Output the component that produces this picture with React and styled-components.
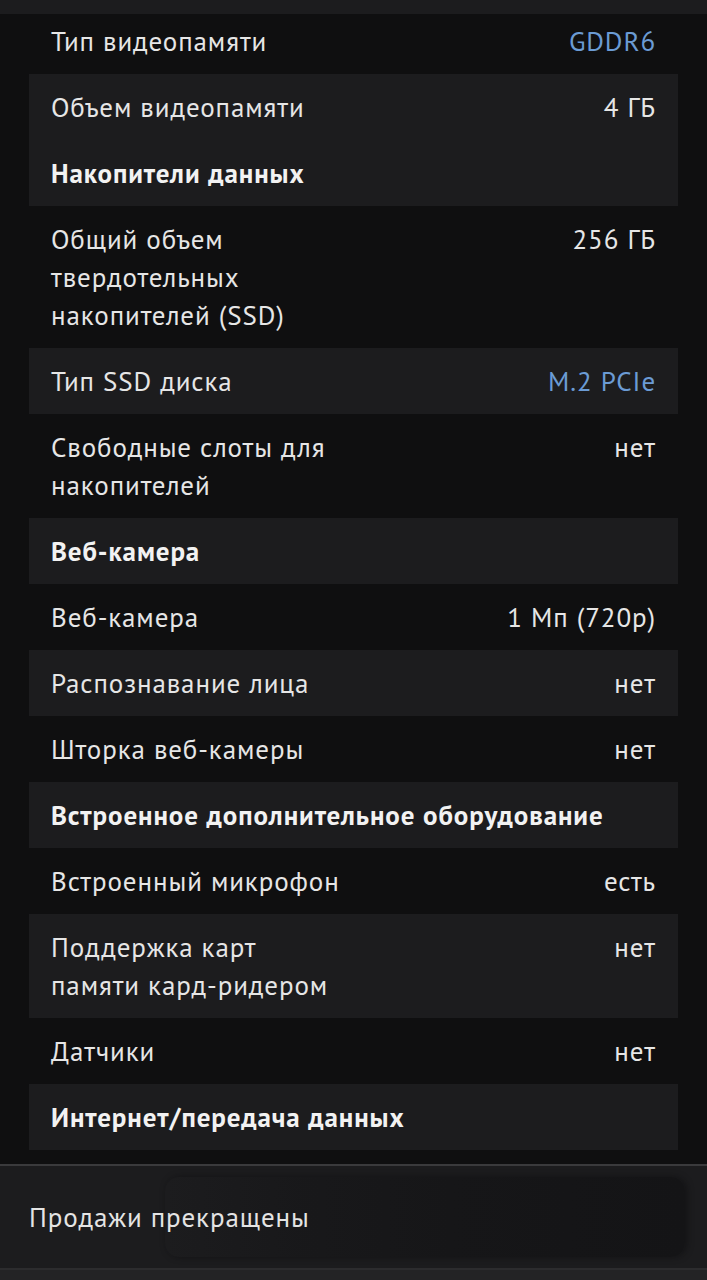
import { createGlobalStyle } from 'styled-components';
import styled from 'styled-components';

const GlobalStyle = createGlobalStyle`
  html, body {
    margin: 0;
    padding: 0;
    background: #0f0f10;
  }
  body {
    font-family: "PT Sans", "Noto Sans", "Open Sans", sans-serif;
    -webkit-font-smoothing: antialiased;
  }
`

const Page = styled.div`
  width: 707px;
  height: 1280px;
  display: flex;
  flex-direction: column;
  background: #0f0f10;
  overflow: hidden;
`

const TopBar = styled.div`
  height: 14px;
  flex: none;
  background: #1c1c1e;
`

const Specs = styled.div`
  flex: 1;
  padding: 0 29px;
  display: flex;
  flex-direction: column;
  overflow: hidden;
`

const Row = styled.div`
  display: flex;
  justify-content: space-between;
  align-items: flex-start;
  gap: 20px;
  padding: ${p => (p.$cut ? '8px' : '14px')} 22px 14px;
  background: ${p => (p.$shaded ? '#1c1c1e' : 'transparent')};
  font-size: 27px;
  line-height: 38px;
  letter-spacing: 0.9px;
  color: #e6e6e6;
`

const Label = styled.div`
  white-space: pre-line;
  font-weight: ${p => (p.$bold ? 700 : 400)};
  color: ${p => (p.$bold ? '#f2f2f2' : '#e6e6e6')};
`

const Value = styled.div`
  white-space: nowrap;
  text-align: right;
  color: ${p => (p.$link ? '#6b9bd4' : '#e6e6e6')};
`

const Footer = styled.div`
  flex: none;
  height: 104px;
  box-sizing: border-box;
  background: #1c1c1e;
  border-top: 2px solid #3a3a3c;
  display: grid;
  grid-template-columns: 136px 1fr;
  align-items: center;
  padding: 0 22px 0 29px;
`

const Status = styled.div`
  grid-row: 1;
  grid-column: 1 / 3;
  z-index: 1;
  font-size: 27px;
  letter-spacing: 0.9px;
  color: #e4e4e4;
  white-space: nowrap;
`

const DisabledButton = styled.div`
  grid-row: 1;
  grid-column: 2;
  height: 80px;
  border-radius: 14px;
  background: linear-gradient(
    90deg,
    rgba(22, 22, 24, 0) 0%,
    rgba(22, 22, 24, 0.6) 25%,
    #161618 55%,
    #141416 100%
  );
  box-shadow: 2px 0 6px rgba(10, 10, 12, 0.5);
`

const BottomBar = styled.div`
  flex: none;
  height: 10px;
  background: #232325;
  border-top: 2px solid #2c2c2e;
`

const rows = [
  { label: 'Тип видеопамяти', value: 'GDDR6', link: true, cut: true },
  { label: 'Объем видеопамяти', value: '4 ГБ', shaded: true },
  { label: 'Накопители данных', header: true },
  { label: 'Общий объем\nтвердотельных\nнакопителей (SSD)', value: '256 ГБ' },
  { label: 'Тип SSD диска', value: 'M.2 PCIe', link: true, shaded: true },
  { label: 'Свободные слоты для\nнакопителей', value: 'нет' },
  { label: 'Веб-камера', header: true },
  { label: 'Веб-камера', value: '1 Мп (720p)' },
  { label: 'Распознавание лица', value: 'нет', shaded: true },
  { label: 'Шторка веб-камеры', value: 'нет' },
  { label: 'Встроенное дополнительное оборудование', header: true },
  { label: 'Встроенный микрофон', value: 'есть' },
  { label: 'Поддержка карт\nпамяти кард-ридером', value: 'нет', shaded: true },
  { label: 'Датчики', value: 'нет' },
  { label: 'Интернет/передача данных', header: true },
]

function App() {
  return (
    <>
      <GlobalStyle />
      <Page>
        <TopBar />
        <Specs>
          {rows.map((r, i) => (
            <Row key={i} $shaded={r.shaded || r.header} $cut={r.cut}>
              <Label $bold={r.header}>{r.label}</Label>
              {r.value && <Value $link={r.link}>{r.value}</Value>}
            </Row>
          ))}
        </Specs>
        <Footer>
          <Status>Продажи прекращены</Status>
          <DisabledButton />
        </Footer>
        <BottomBar />
      </Page>
    </>
  );
}

export default App;
